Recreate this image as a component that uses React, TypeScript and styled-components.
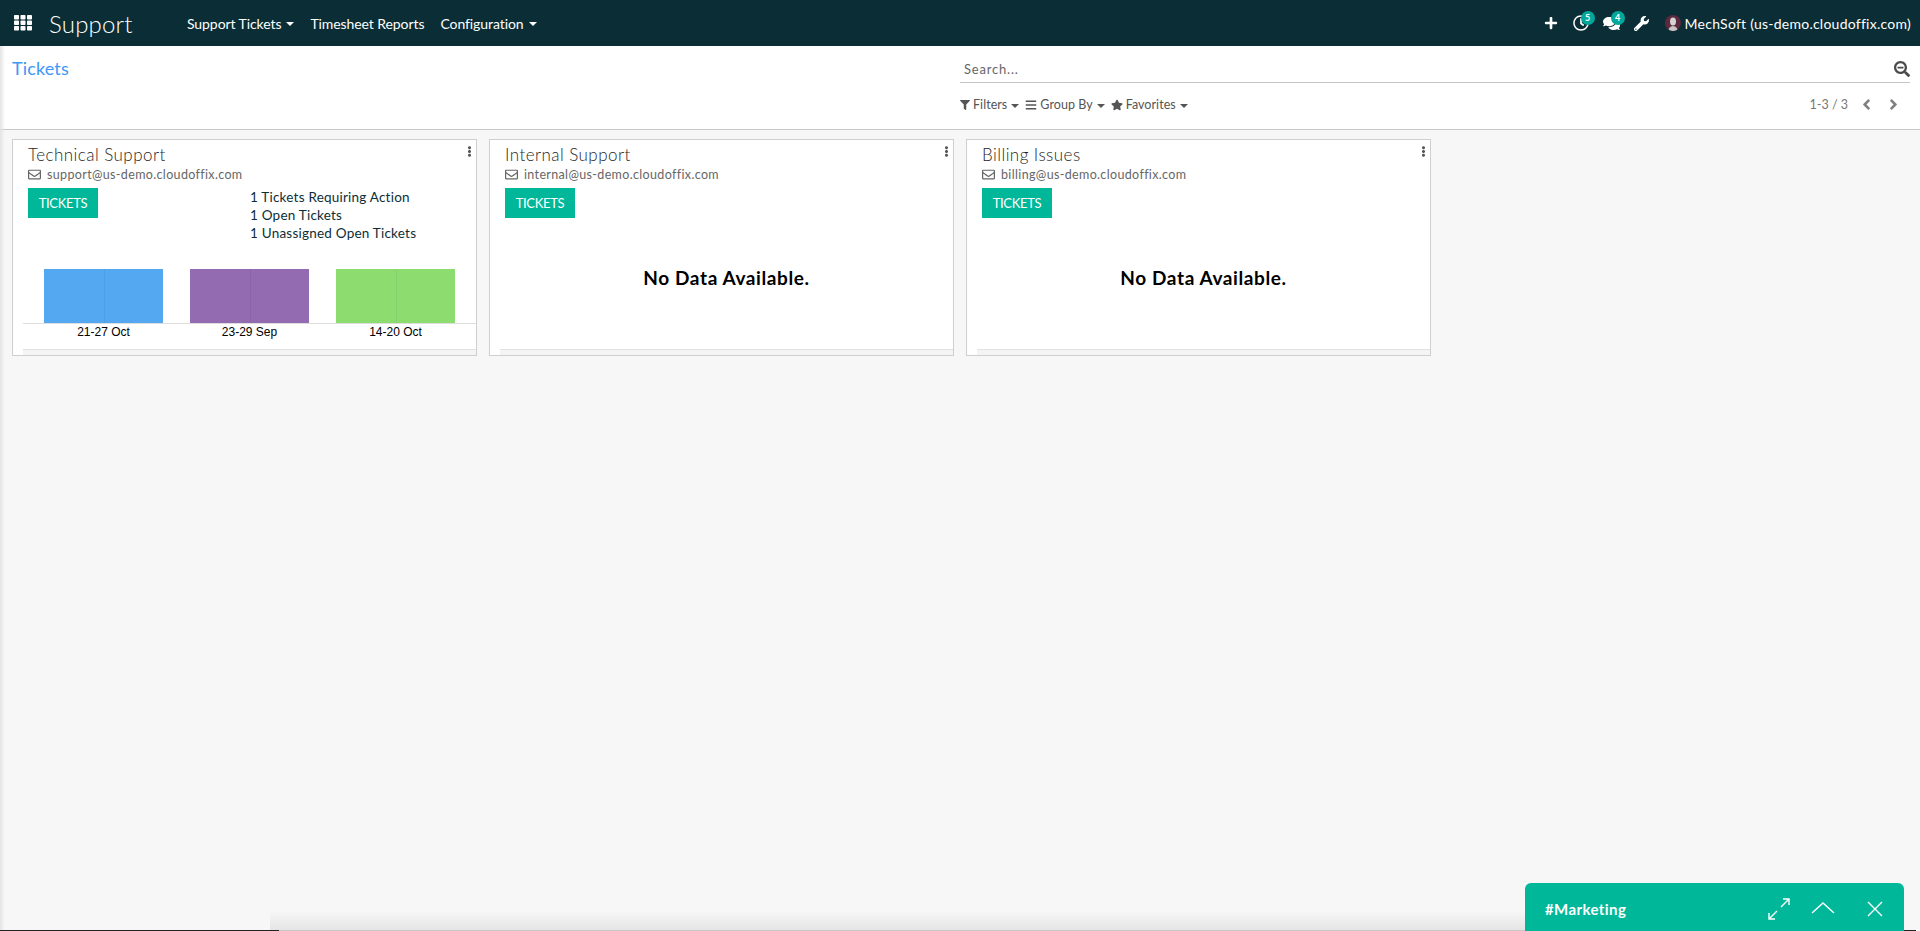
import styled, { createGlobalStyle } from "styled-components"
import {
  FaPlus,
  FaRegClock,
  FaComments,
  FaWrench,
  FaSearchMinus,
  FaFilter,
  FaBars,
  FaStar,
  FaRegEnvelope,
  FaEllipsisV,
  FaAngleLeft,
  FaAngleRight,
} from "react-icons/fa"

const GlobalStyle = createGlobalStyle`
  html, body {
    margin: 0;
    padding: 0;
    height: 100%;
    overflow: hidden;
  }
  body {
    background-color: #f7f7f7;
    font-family: Lato, "Open Sans", sans-serif;
  }
  * {
    box-sizing: border-box;
  }
`

const Page = styled.div`
  position: relative;
  width: 1920px;
  height: 931px;
  overflow: hidden;
`

const Navbar = styled.nav`
  display: flex;
  align-items: center;
  height: 46px;
  padding-left: 14px;
  background-color: #0b2e36;
  color: #ffffff;
`

const AppsIcon = styled.svg`
  width: 18px;
  height: 16px;
  fill: #ffffff;
  margin-right: 17px;
`

const Brand = styled.div`
  width: 138px;
  font-size: 24px;
  font-weight: 300;
  letter-spacing: 0.2px;
`

const Menu = styled.div`
  display: flex;
  gap: 16px;
  font-size: 14px;
  letter-spacing: -0.08px;
`

const MenuItem = styled.span`
  display: flex;
  align-items: center;
  white-space: nowrap;
`

const Caret = styled.i<{ $color?: string; $gap?: number }>`
  display: inline-block;
  margin-left: ${(props) => props.$gap ?? 5}px;
  margin-top: 2px;
  border-top: 4px solid ${(props) => props.$color || "#ffffff"};
  border-left: 4px solid transparent;
  border-right: 4px solid transparent;
`

const NavRight = styled.div`
  display: flex;
  align-items: center;
  margin-left: auto;
  padding-right: 9px;
  font-size: 14px;
  letter-spacing: 0.25px;
`

const NavIcon = styled.span<{ $width: number }>`
  position: relative;
  display: flex;
  align-items: center;
  width: ${(props) => props.$width}px;
  font-size: 15px;
`

const Badge = styled.span`
  position: absolute;
  top: -4px;
  left: 8px;
  width: 14px;
  height: 14px;
  border-radius: 50%;
  background-color: #00a79a;
  font-size: 9px;
  font-weight: 700;
  line-height: 14px;
  text-align: center;
  letter-spacing: 0;
`

const Avatar = styled.svg`
  width: 16px;
  height: 16px;
  margin-right: 4px;
`

const ControlPanel = styled.div`
  display: grid;
  grid-template-columns: 960px 1fr;
  height: 84px;
  background-color: #ffffff;
  border-bottom: 1px solid #c8c8c8;
`

const Breadcrumb = styled.div`
  padding: 11px 0 0 12px;
  font-size: 18px;
  color: #3d97f5;
  letter-spacing: 0.15px;
`

const ControlRight = styled.div`
  display: flex;
  flex-direction: column;
  padding-right: 10px;
`

const SearchRow = styled.div`
  display: flex;
  align-items: center;
  justify-content: space-between;
  height: 37px;
  padding: 9px 0 0 4px;
  border-bottom: 1px solid #c4c4c4;
  font-size: 13px;
  letter-spacing: 0.8px;
  color: #666666;
`

const SearchIcon = styled.span`
  display: flex;
  font-size: 16px;
  color: #4a4a4a;
`

const ButtonsRow = styled.div`
  display: flex;
  align-items: center;
  justify-content: space-between;
  padding-top: 13px;
  font-size: 12.5px;
  color: #555555;
`

const Filters = styled.div`
  display: flex;
  gap: 6px;
`

const FilterButton = styled.span`
  display: flex;
  align-items: center;
  gap: 3px;
  font-size: 12.5px;
  letter-spacing: 0.05px;
  white-space: nowrap;
`

const Pager = styled.div`
  display: flex;
  align-items: center;
  color: #777777;
`

const PagerValue = styled.span`
  margin-right: 10px;
`

const PagerArrow = styled.span`
  display: flex;
  width: 27px;
  font-size: 17px;
  color: #808080;

  &:last-child {
    width: 25px;
  }
`

const CardRow = styled.main`
  display: flex;
  gap: 12px;
  padding: 9px 0 0 12px;
`

const Card = styled.section`
  position: relative;
  display: flex;
  flex-direction: column;
  width: 465px;
  height: 217px;
  background-color: #ffffff;
  border: 1px solid #cfcfcf;
  padding-left: 10px;
`

const CardMenu = styled.span`
  position: absolute;
  top: 6px;
  right: 1px;
  display: flex;
  font-size: 11px;
  color: #555555;
`

const CardTitle = styled.div`
  padding: 4px 0 0 5px;
  font-size: 17px;
  font-weight: 300;
  line-height: 22px;
  color: #1f1f1f;
  letter-spacing: 0.45px;
`

const CardEmail = styled.div`
  display: flex;
  align-items: center;
  gap: 6px;
  padding-left: 5px;
  font-size: 12.5px;
  line-height: 17px;
  letter-spacing: 0.35px;
  color: #666666;
`

const TopRow = styled.div`
  display: grid;
  grid-template-columns: 222px 1fr;
  height: 65px;
  padding: 5px 0 0 5px;
`

const TicketsButton = styled.button`
  width: 70px;
  height: 30px;
  padding: 0;
  border: none;
  background-color: #00b899;
  color: #ffffff;
  font-family: inherit;
  font-size: 13px;
  letter-spacing: -0.3px;
`

const Stats = styled.div`
  font-size: 13.5px;
  line-height: 18px;
  color: #0b2e36;
  letter-spacing: 0.22px;
`

const Chart = styled.div`
  display: flex;
  flex-direction: column;
  flex: 1;
  padding-top: 21px;
`

const Bars = styled.div`
  display: flex;
  gap: 27px;
  height: 55px;
  padding-left: 21px;
  border-bottom: 1px solid #dddddd;
`

const Bar = styled.div<{ $color: string }>`
  position: relative;
  width: 119px;
  height: 54px;
  background-color: ${(props) => props.$color};

  &::after {
    content: "";
    position: absolute;
    top: 0;
    bottom: 0;
    left: 50%;
    border-left: 1px solid rgba(0, 0, 0, 0.05);
  }
`

const Labels = styled.div`
  display: flex;
  gap: 27px;
  padding: 1px 0 0 21px;
`

const BarLabel = styled.div`
  width: 119px;
  text-align: center;
  font-family: "Liberation Sans", Arial, sans-serif;
  font-size: 12px;
  line-height: 14px;
  color: #000000;
`

const NoData = styled.div`
  flex: 1;
  padding-top: 18px;
  text-align: center;
  font-size: 19px;
  font-weight: 700;
  color: #000000;
  letter-spacing: 0.6px;
`

const CardFooter = styled.div`
  height: 6px;
  margin-top: auto;
  background-color: #f4f4f4;
  border-top: 1px solid #e2e2e2;
`

const ChatWindow = styled.aside`
  position: absolute;
  left: 1525px;
  bottom: 0;
  display: flex;
  align-items: center;
  width: 379px;
  height: 48px;
  padding: 4px 0 0 20px;
  border-radius: 6px 6px 0 0;
  background-color: #00b899;
  color: #ffffff;
  font-size: 15px;
  font-weight: 700;
  letter-spacing: 0.4px;
`

const ChatTitle = styled.span`
  flex: 1;
`

const ChatActions = styled.div`
  display: flex;
  align-items: center;
  gap: 20px;
  padding-right: 17px;
`

const ChatIcon = styled.svg<{ $offset?: number }>`
  width: 24px;
  height: 24px;
  margin-left: ${(props) => props.$offset ?? 0}px;
  fill: none;
  stroke: #ffffff;
  stroke-width: 1.4;
`

const WindowEdge = styled.div`
  position: absolute;
  top: 46px;
  left: 0;
  bottom: 0;
  width: 5px;
  background: linear-gradient(to right, #e4e4e4, rgba(246, 246, 246, 0));
`

const WindowShade = styled.div`
  position: absolute;
  left: 270px;
  right: 395px;
  bottom: 0;
  height: 20px;
  background: linear-gradient(to bottom, rgba(228, 228, 228, 0), #e4e4e4);
`

const WindowBottomLine = styled.div`
  position: absolute;
  left: 0;
  right: 0;
  bottom: 0;
  height: 1px;
  background: linear-gradient(
    to right,
    #222222 0,
    #222222 279px,
    #c8c8c8 279px,
    #c8c8c8 1640px,
    #222222 1640px,
    #222222 1916px,
    transparent 1916px
  );
`

const barData = [
  { label: "21-27 Oct", color: "#54a8f2" },
  { label: "23-29 Sep", color: "#936bb0" },
  { label: "14-20 Oct", color: "#8ddc70" },
]

const teams = [
  { name: "Technical Support", email: "support@us-demo.cloudoffix.com", hasData: true },
  { name: "Internal Support", email: "internal@us-demo.cloudoffix.com", hasData: false },
  { name: "Billing Issues", email: "billing@us-demo.cloudoffix.com", hasData: false },
]

export default function App() {
  return (
    <Page>
      <GlobalStyle />
      <Navbar>
        <AppsIcon viewBox="0 0 18 16">
          {[0, 6.5, 13].map((x) =>
            [0, 5.5, 11].map((y) => <rect key={`${x}-${y}`} x={x} y={y} width="5" height="4.5" rx="0.8" />)
          )}
        </AppsIcon>
        <Brand>Support</Brand>
        <Menu>
          <MenuItem>
            Support Tickets
            <Caret />
          </MenuItem>
          <MenuItem>Timesheet Reports</MenuItem>
          <MenuItem>
            Configuration
            <Caret />
          </MenuItem>
        </Menu>
        <NavRight>
          <NavIcon $width={29}>
            <FaPlus size={14} />
          </NavIcon>
          <NavIcon $width={30}>
            <FaRegClock size={16} />
            <Badge>5</Badge>
          </NavIcon>
          <NavIcon $width={31}>
            <FaComments size={17} />
            <Badge>4</Badge>
          </NavIcon>
          <NavIcon $width={31}>
            <FaWrench size={15} />
          </NavIcon>
          <Avatar viewBox="0 0 16 16">
            <circle cx="8" cy="8" r="8" fill="#5b2a3e" />
            <ellipse cx="8" cy="6.5" rx="3" ry="4" fill="#d8d4d4" />
            <path d="M3.5 14.5c1-3 3-3.5 4.5-3.5s3.5.5 4.5 3.5a8 8 0 0 1-9 0z" fill="#c8c4c4" />
          </Avatar>
          MechSoft (us-demo.cloudoffix.com)
        </NavRight>
      </Navbar>

      <ControlPanel>
        <Breadcrumb>Tickets</Breadcrumb>
        <ControlRight>
          <SearchRow>
            Search...
            <SearchIcon>
              <FaSearchMinus />
            </SearchIcon>
          </SearchRow>
          <ButtonsRow>
            <Filters>
              <FilterButton>
                <FaFilter size={10} />
                Filters
                <Caret $color="#555555" $gap={1} />
              </FilterButton>
              <FilterButton>
                <FaBars size={12} />
                Group By
                <Caret $color="#555555" $gap={1} />
              </FilterButton>
              <FilterButton>
                <FaStar size={12} />
                Favorites
                <Caret $color="#555555" $gap={1} />
              </FilterButton>
            </Filters>
            <Pager>
              <PagerValue>1-3 / 3</PagerValue>
              <PagerArrow>
                <FaAngleLeft />
              </PagerArrow>
              <PagerArrow>
                <FaAngleRight />
              </PagerArrow>
            </Pager>
          </ButtonsRow>
        </ControlRight>
      </ControlPanel>

      <CardRow>
        {teams.map((team) => (
          <Card key={team.name}>
            <CardMenu>
              <FaEllipsisV />
            </CardMenu>
            <CardTitle>{team.name}</CardTitle>
            <CardEmail>
              <FaRegEnvelope size={13} />
              {team.email}
            </CardEmail>
            <TopRow>
              <TicketsButton>TICKETS</TicketsButton>
              {team.hasData && (
                <Stats>
                  <div>1 Tickets Requiring Action</div>
                  <div>1 Open Tickets</div>
                  <div>1 Unassigned Open Tickets</div>
                </Stats>
              )}
            </TopRow>
            {team.hasData ? (
              <Chart>
                <Bars>
                  {barData.map((bar) => (
                    <Bar key={bar.label} $color={bar.color} />
                  ))}
                </Bars>
                <Labels>
                  {barData.map((bar) => (
                    <BarLabel key={bar.label}>{bar.label}</BarLabel>
                  ))}
                </Labels>
              </Chart>
            ) : (
              <NoData>No Data Available.</NoData>
            )}
            <CardFooter />
          </Card>
        ))}
      </CardRow>

      <WindowEdge />
      <WindowShade />
      <WindowBottomLine />
      <ChatWindow>
        <ChatTitle>#Marketing</ChatTitle>
        <ChatActions>
          <ChatIcon viewBox="0 0 24 24">
            <path d="M14 10l8-8M16 2h6v6M10 14l-8 8M2 16v6h6" />
          </ChatIcon>
          <ChatIcon viewBox="0 0 24 24">
            <path d="M1 16L12 6l11 10" />
          </ChatIcon>
          <ChatIcon viewBox="0 0 24 24" $offset={8}>
            <path d="M5 5l14 14M19 5L5 19" />
          </ChatIcon>
        </ChatActions>
      </ChatWindow>
    </Page>
  )
}
